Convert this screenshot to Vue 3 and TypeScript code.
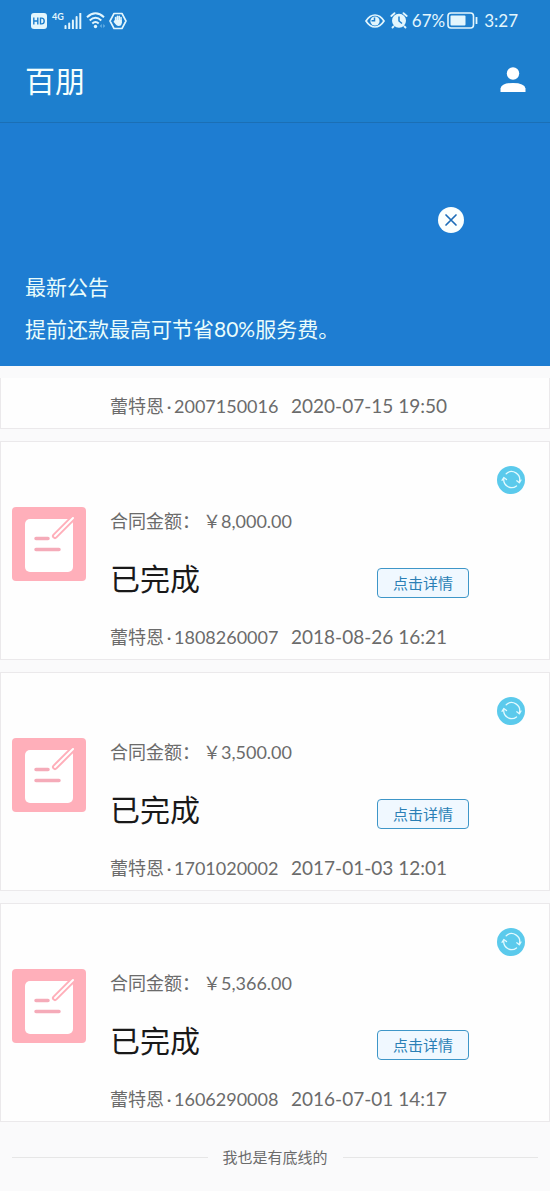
<script setup lang="ts">
interface Contract {
  serial: string
  date: string
  amount: string
}

const owner = '蕾特恩'
const previous = { serial: '2007150016', date: '2020-07-15 19:50' }
const contracts: Contract[] = [
  { serial: '1808260007', date: '2018-08-26 16:21', amount: '8,000.00' },
  { serial: '1701020002', date: '2017-01-03 12:01', amount: '3,500.00' },
  { serial: '1606290008', date: '2016-07-01 14:17', amount: '5,366.00' },
]
</script>

<template>
  <div class="page">
    <header class="top">
      <div class="status">
        <div class="status-left">
          <svg width="16" height="16" viewBox="0 0 16 16">
            <rect width="16" height="16" rx="3" fill="#e3f6fd" />
            <path d="M2.800 4.500v7M2.800 8h4M6.800 4.500v7M9.500 5.100v5.800h1q2.700 0 2.700-2.900t-2.700-2.900z" fill="none" stroke="#1d7fce" stroke-width="1.400" />
          </svg>
          <span class="network">4G</span>
          <svg width="18" height="16" viewBox="0 0 18 16">
            <path d="M1.500 13v2.500M5.200 10.500v5M8.900 7.500v8M12.600 4v11.500M16.300 .5v15" stroke="#e3f6fd" stroke-width="2" stroke-linecap="round" />
          </svg>
          <svg width="20" height="17" viewBox="0 0 20 17" class="wifi">
            <g fill="none" stroke="#e3f6fd" stroke-width="2">
              <path d="M1 5.200Q9.500-2.600 18 5.200" />
              <path d="M3.700 8.400Q9.500 3.200 15.300 8.400" />
              <path d="M6.300 11.500Q9.500 8.500 12.700 11.500" />
            </g>
            <circle cx="9.500" cy="14.500" r="1.700" fill="#e3f6fd" />
            <path d="M15.800 12v4l-2-2zM17.200 12v4l2-2z" fill="#69b1e5" />
          </svg>
          <svg width="18" height="18" viewBox="0 0 18 18">
            <path d="M5 1.500h8L17 9l-4 7.500H5L1 9z" fill="none" stroke="#e3f6fd" stroke-width="1.600" stroke-linejoin="round" />
            <path d="M6.600 5.500v4M8.400 4.300v5M10.200 4.300v5M12 5.500v5" stroke="#e3f6fd" stroke-width="1.600" stroke-linecap="round" />
            <path d="M5.800 8h7v2.500q0 3.500-3.300 3.500Q7.500 14 4.500 9.800z" fill="#e3f6fd" />
          </svg>
        </div>
        <div class="status-right">
          <svg width="20" height="14" viewBox="0 0 20 14">
            <path d="M1 7Q4.800 1 10 1t9 6q-3.800 6-9 6T1 7z" fill="none" stroke="#e3f6fd" stroke-width="1.700" />
            <circle cx="10" cy="7" r="4.600" fill="#e3f6fd" />
            <path d="M9.500 3.500v3.200H6.500" fill="none" stroke="#1d7fce" stroke-width="1.500" />
          </svg>
          <svg width="18" height="17" viewBox="0 0 18 17" class="alarm">
            <circle cx="9" cy="8.700" r="7" fill="#e3f6fd" />
            <path d="M1.300 4L4.500 1.200M16.700 4L13.500 1.200M3.500 14.500l-1 1M14.500 14.500l1 1" stroke="#e3f6fd" stroke-width="1.800" stroke-linecap="round" />
            <path d="M9 4.500V9l3 2.500" fill="none" stroke="#1d7fce" stroke-width="1.500" />
          </svg>
          <span>67%</span>
          <svg width="31" height="17" viewBox="0 0 31 17" class="battery">
            <rect x="1" y="1" width="25.500" height="15" rx="3" fill="none" stroke="#e3f6fd" stroke-width="1.600" />
            <rect x="3.500" y="3.500" width="15" height="10" rx="1" fill="#e3f6fd" />
            <path d="M29.500 5v7" stroke="#e3f6fd" stroke-width="1.800" />
          </svg>
          <span>3:27</span>
        </div>
      </div>
      <div class="bar">
        <h1>百朋</h1>
        <button class="icon-button" aria-label="个人中心">
          <svg width="26" height="26" viewBox="0 0 26 26" fill="#fff">
            <circle cx="13" cy="6.500" r="6.200" />
            <path d="M.5 25v-3.500Q1.500 16 13 16t12.500 5.500V25z" />
          </svg>
        </button>
      </div>
    </header>

    <section class="notice">
      <button class="icon-button close" aria-label="关闭">
        <svg width="26" height="26" viewBox="0 0 26 26">
          <circle cx="13" cy="13" r="13" fill="#fafffe" />
          <path d="M8 8l10 10M18 8L8 18" stroke="#1d6db8" stroke-width="1.700" stroke-linecap="round" />
        </svg>
      </button>
      <h2>最新公告</h2>
      <p>提前还款最高可节省80%服务费。</p>
    </section>

    <main class="list">
      <article class="card partial">
        <div class="meta">
          <span class="serial">{{ owner }}<i class="dot">·</i>{{ previous.serial }}</span>
          <time>{{ previous.date }}</time>
        </div>
      </article>

      <article v-for="item in contracts" :key="item.serial" class="card">
        <svg class="thumb" width="74" height="74" viewBox="0 0 74 74">
          <rect width="74" height="74" rx="4" fill="#ffafba" />
          <rect x="13" y="12" width="48" height="53" rx="5" fill="#fff" />
          <path d="M24 31.500h12M24 42.500h23" stroke="#f5abb9" stroke-width="3.500" stroke-linecap="round" />
          <path d="M61 11L43 29" stroke="#ffafba" stroke-width="6" stroke-linecap="round" />
          <path d="M61 11L43 29" stroke="#fff" stroke-width="2" stroke-linecap="round" />
        </svg>
        <div class="body">
          <button class="icon-button refresh" aria-label="刷新">
            <svg width="28" height="28" viewBox="0 0 28 28">
              <circle cx="14" cy="14" r="14" fill="#5bcaec" />
              <g fill="none" stroke="#e2faff" stroke-width="1.300" stroke-linecap="round" stroke-linejoin="round">
                <path d="M9.200 7.800A8 8 0 0 1 22.300 16M19.500 20A8 8 0 0 1 6.800 12.500" />
                <path d="M19.800 14.800l2.500 2 1.700-2.800M5 14.300l1.800-2.800 2.700 2" />
              </g>
            </svg>
          </button>
          <div class="amount">合同金额：<span class="sum">￥{{ item.amount }}</span></div>
          <div class="state">
            <strong>已完成</strong>
            <button class="detail">点击详情</button>
          </div>
          <div class="meta">
            <span class="serial">{{ owner }}<i class="dot">·</i>{{ item.serial }}</span>
            <time>{{ item.date }}</time>
          </div>
        </div>
      </article>
    </main>

    <footer class="end">我也是有底线的</footer>
  </div>
</template>

<style>
body {
  margin: 0;
  background: #fafafb;
}
</style>

<style scoped>
.page {
  font-family: Lato, "Noto Sans CJK SC", sans-serif;
  color: #6b6b6b;
}
h1, h2, p {
  margin: 0;
  font-weight: 400;
}
button {
  font-family: inherit;
  cursor: pointer;
}
.icon-button {
  padding: 0;
  border: 0;
  background: none;
  display: flex;
}
.top {
  background: #1d7fce;
  border-bottom: 1px solid #1b6fb5;
}
.status {
  display: flex;
  justify-content: space-between;
  align-items: center;
  height: 41px;
  padding: 0 32px 0 31px;
  color: #e3f6fd;
  font-size: 17px;
}
.status-left, .status-right {
  display: flex;
  align-items: center;
}
.network {
  font-size: 9px;
  line-height: 9px;
  font-weight: 700;
  align-self: flex-start;
  margin-left: 5px;
}
.wifi {
  margin: 0 3px 0 4px;
}
.alarm {
  margin: 0 4px 0 5px;
}
.battery {
  margin: 0 6px 0 2px;
}
.bar {
  display: flex;
  justify-content: space-between;
  align-items: center;
  height: 77px;
  padding: 0 24px 4px 25px;
}
h1 {
  color: #f5fffd;
  font-size: 30px;
  line-height: 40px;
}
.notice {
  background: #1e7dd2;
  color: #e9fcfb;
  padding: 84px 24px 21px 25px;
  font-size: 21px;
  line-height: 32px;
}
.close {
  margin: 0 62px 38px auto;
}
h2 {
  font-size: 21px;
  line-height: 32px;
  margin-bottom: 10px;
}
.list {
  display: flex;
  flex-direction: column;
  gap: 12px;
  padding-top: 12px;
}
.card {
  display: flex;
  gap: 24px;
  padding: 24px 24px 6px 11px;
  background: #fefefe;
  border: 1px solid #ebe9eb;
}
.partial {
  border-top: 0;
  padding: 12px 24px 6px 109px;
}
.thumb {
  flex: none;
  margin-top: 41px;
}
.body {
  flex: 1;
  min-width: 0;
}
.refresh {
  margin-left: auto;
}
.amount {
  margin-top: 13px;
  font-size: 18px;
  line-height: 28px;
}
.sum {
  margin-left: 3px;
}
.state {
  display: flex;
  align-items: center;
  justify-content: space-between;
  margin: 23px 56px 23px 0;
}
strong {
  color: #191919;
  font-size: 30px;
  line-height: 40px;
  font-weight: 400;
}
.detail {
  margin-top: 10px;
  width: 92px;
  height: 30px;
  padding: 0;
  border: 1px solid #3e96c8;
  border-radius: 4px;
  background: #f0f8ff;
  color: #2a7fb5;
  font-size: 15px;
  line-height: 24px;
}
.meta {
  display: flex;
  gap: 10px;
  font-size: 18px;
  line-height: 32px;
  white-space: nowrap;
}
time {
  font-size: 19px;
}
.serial {
  min-width: 171px;
}
.dot {
  display: inline-block;
  width: 10px;
  text-align: center;
  font-style: normal;
}
.end {
  display: flex;
  align-items: center;
  gap: 15px;
  padding: 20px 12px 19px;
  font-size: 15px;
  line-height: 30px;
}
.end::before, .end::after {
  content: "";
  flex: 1;
  height: 1px;
  background: #e6e6e6;
}
</style>
